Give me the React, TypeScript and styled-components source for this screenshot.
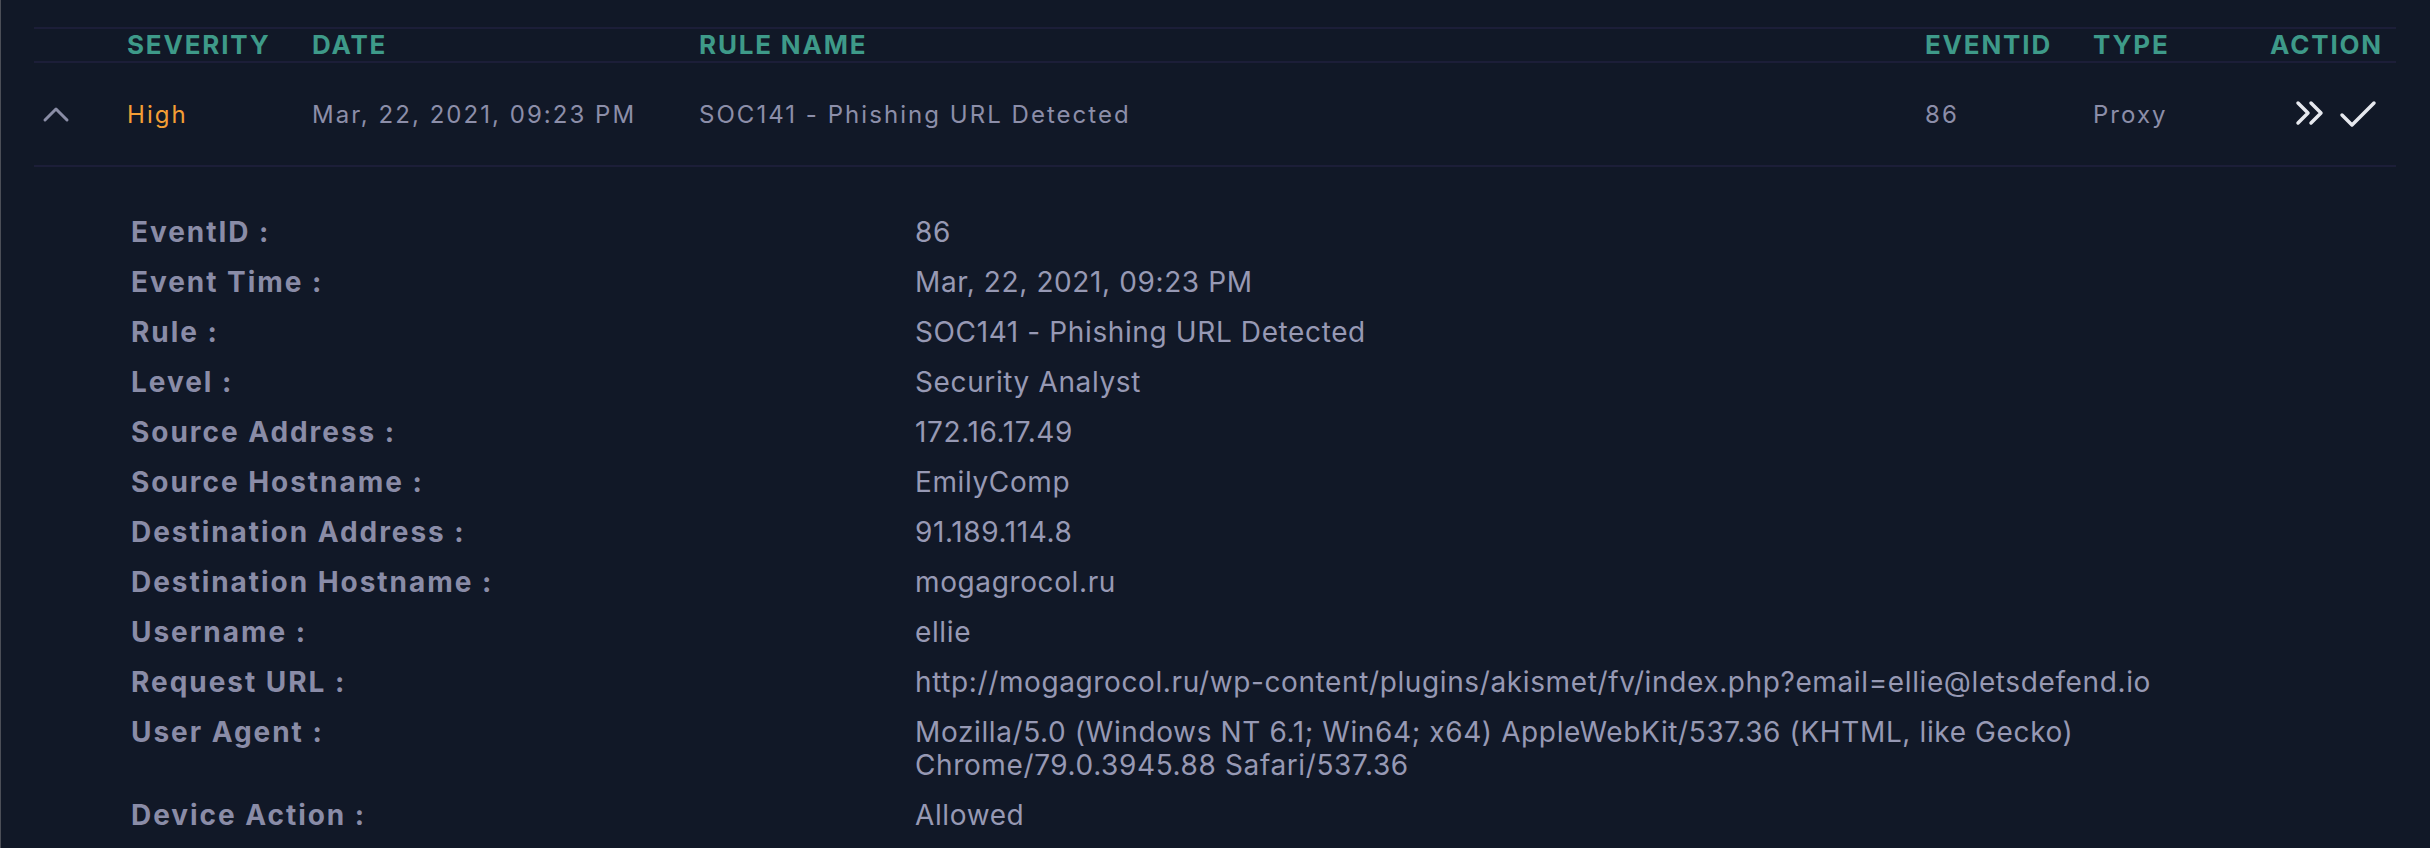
import React from "react";
import styled, { createGlobalStyle } from "styled-components";

const GlobalStyle = createGlobalStyle`
  html, body {
    margin: 0;
    padding: 0;
    background: #111827;
  }
  body {
    font-family: Inter, "Noto Sans", "Liberation Sans", sans-serif;
    -webkit-font-smoothing: antialiased;
  }
`;

const Page = styled.div`
  width: 2430px;
  min-height: 848px;
  box-sizing: border-box;
  background: #111827;
  border-left: 1px solid #4b4e57;
  padding: 27px 34px 0 33px;
  overflow: hidden;
`;

const Table = styled.div`
  width: 2362px;
  display: flex;
  flex-direction: column;
`;

const columns = "93px 185px 387px 1fr 168px 120px 170px";

const HeaderRow = styled.div`
  display: grid;
  grid-template-columns: ${columns};
  padding-right: 13px;
  border-top: 2px solid #1c1e38;
  border-bottom: 2px solid #1c1e38;
  height: 32px;
  align-items: center;
`;

const HeaderCell = styled.div<{ $align?: string }>`
  font-size: 26px;
  line-height: 32px;
  font-weight: 700;
  letter-spacing: 0.07em;
  color: #3e9a89;
  text-transform: uppercase;
  text-align: ${(p) => p.$align || "left"};
  white-space: nowrap;
`;

const DataRow = styled.div`
  display: grid;
  grid-template-columns: ${columns};
  padding-right: 13px;
  height: 102px;
  border-bottom: 2px solid #1c1e38;
  align-items: center;
`;

const Cell = styled.div<{ $tone?: "high" | "muted" }>`
  font-size: 24px;
  letter-spacing: 0.085em;
  color: ${(p) => (p.$tone === "high" ? "#f49e35" : "#8c8ea9")};
  white-space: nowrap;
`;

const ToggleCell = styled.div`
  display: flex;
  align-items: center;
  padding-left: 8px;
`;

const ActionCell = styled.div`
  display: flex;
  justify-content: flex-end;
  align-items: center;
  gap: 14px;
  padding-right: 6px;
`;

const Details = styled.div`
  display: grid;
  grid-template-columns: 784px 1300px;
  row-gap: 17px;
  padding: 49px 0 0 97px;
`;

const Label = styled.div`
  font-size: 28px;
  line-height: 33px;
  font-weight: 700;
  letter-spacing: 0.07em;
  color: #8a8ca7;
`;

const Value = styled.div`
  font-size: 28px;
  line-height: 33px;
  letter-spacing: 0.022em;
  color: #9799b4;
`;

const ChevronUp = () => (
  <svg width="28" height="18" viewBox="0 0 28 18" fill="none">
    <path
      d="M3 15 L14 4 L25 15"
      stroke="#8a8da6"
      strokeWidth="3"
      strokeLinecap="round"
      strokeLinejoin="round"
    />
  </svg>
);

const DoubleChevron = () => (
  <svg width="30" height="28" viewBox="0 0 30 28" fill="none">
    <path
      d="M3 3 L13 13 L3 23 M16 3 L26 13 L16 23"
      stroke="#e6e8ee"
      strokeWidth="3.5"
      strokeLinecap="round"
      strokeLinejoin="round"
    />
  </svg>
);

const Check = () => (
  <svg width="38" height="28" viewBox="0 0 38 28" fill="none">
    <path
      d="M3 15 L13 25 L35 3"
      stroke="#e6e8ee"
      strokeWidth="3.5"
      strokeLinecap="round"
      strokeLinejoin="round"
    />
  </svg>
);

const details: [string, string][] = [
  ["EventID :", "86"],
  ["Event Time :", "Mar, 22, 2021, 09:23 PM"],
  ["Rule :", "SOC141 - Phishing URL Detected"],
  ["Level :", "Security Analyst"],
  ["Source Address :", "172.16.17.49"],
  ["Source Hostname :", "EmilyComp"],
  ["Destination Address :", "91.189.114.8"],
  ["Destination Hostname :", "mogagrocol.ru"],
  ["Username :", "ellie"],
  [
    "Request URL :",
    "http://mogagrocol.ru/wp-content/plugins/akismet/fv/index.php?email=ellie@letsdefend.io",
  ],
  [
    "User Agent :",
    "Mozilla/5.0 (Windows NT 6.1; Win64; x64) AppleWebKit/537.36 (KHTML, like Gecko) Chrome/79.0.3945.88 Safari/537.36",
  ],
  ["Device Action :", "Allowed"],
];

export default function App() {
  return (
    <>
      <GlobalStyle />
      <Page>
        <Table>
          <HeaderRow>
            <div />
            <HeaderCell>Severity</HeaderCell>
            <HeaderCell>Date</HeaderCell>
            <HeaderCell>Rule Name</HeaderCell>
            <HeaderCell>EventID</HeaderCell>
            <HeaderCell>Type</HeaderCell>
            <HeaderCell $align="right">Action</HeaderCell>
          </HeaderRow>
          <DataRow>
            <ToggleCell>
              <ChevronUp />
            </ToggleCell>
            <Cell $tone="high">High</Cell>
            <Cell>Mar, 22, 2021, 09:23 PM</Cell>
            <Cell>SOC141 - Phishing URL Detected</Cell>
            <Cell>86</Cell>
            <Cell>Proxy</Cell>
            <ActionCell>
              <DoubleChevron />
              <Check />
            </ActionCell>
          </DataRow>
          <Details>
            {details.map(([k, v]) => (
              <React.Fragment key={k}>
                <Label>{k}</Label>
                <Value>{v}</Value>
              </React.Fragment>
            ))}
          </Details>
        </Table>
      </Page>
    </>
  );
}
